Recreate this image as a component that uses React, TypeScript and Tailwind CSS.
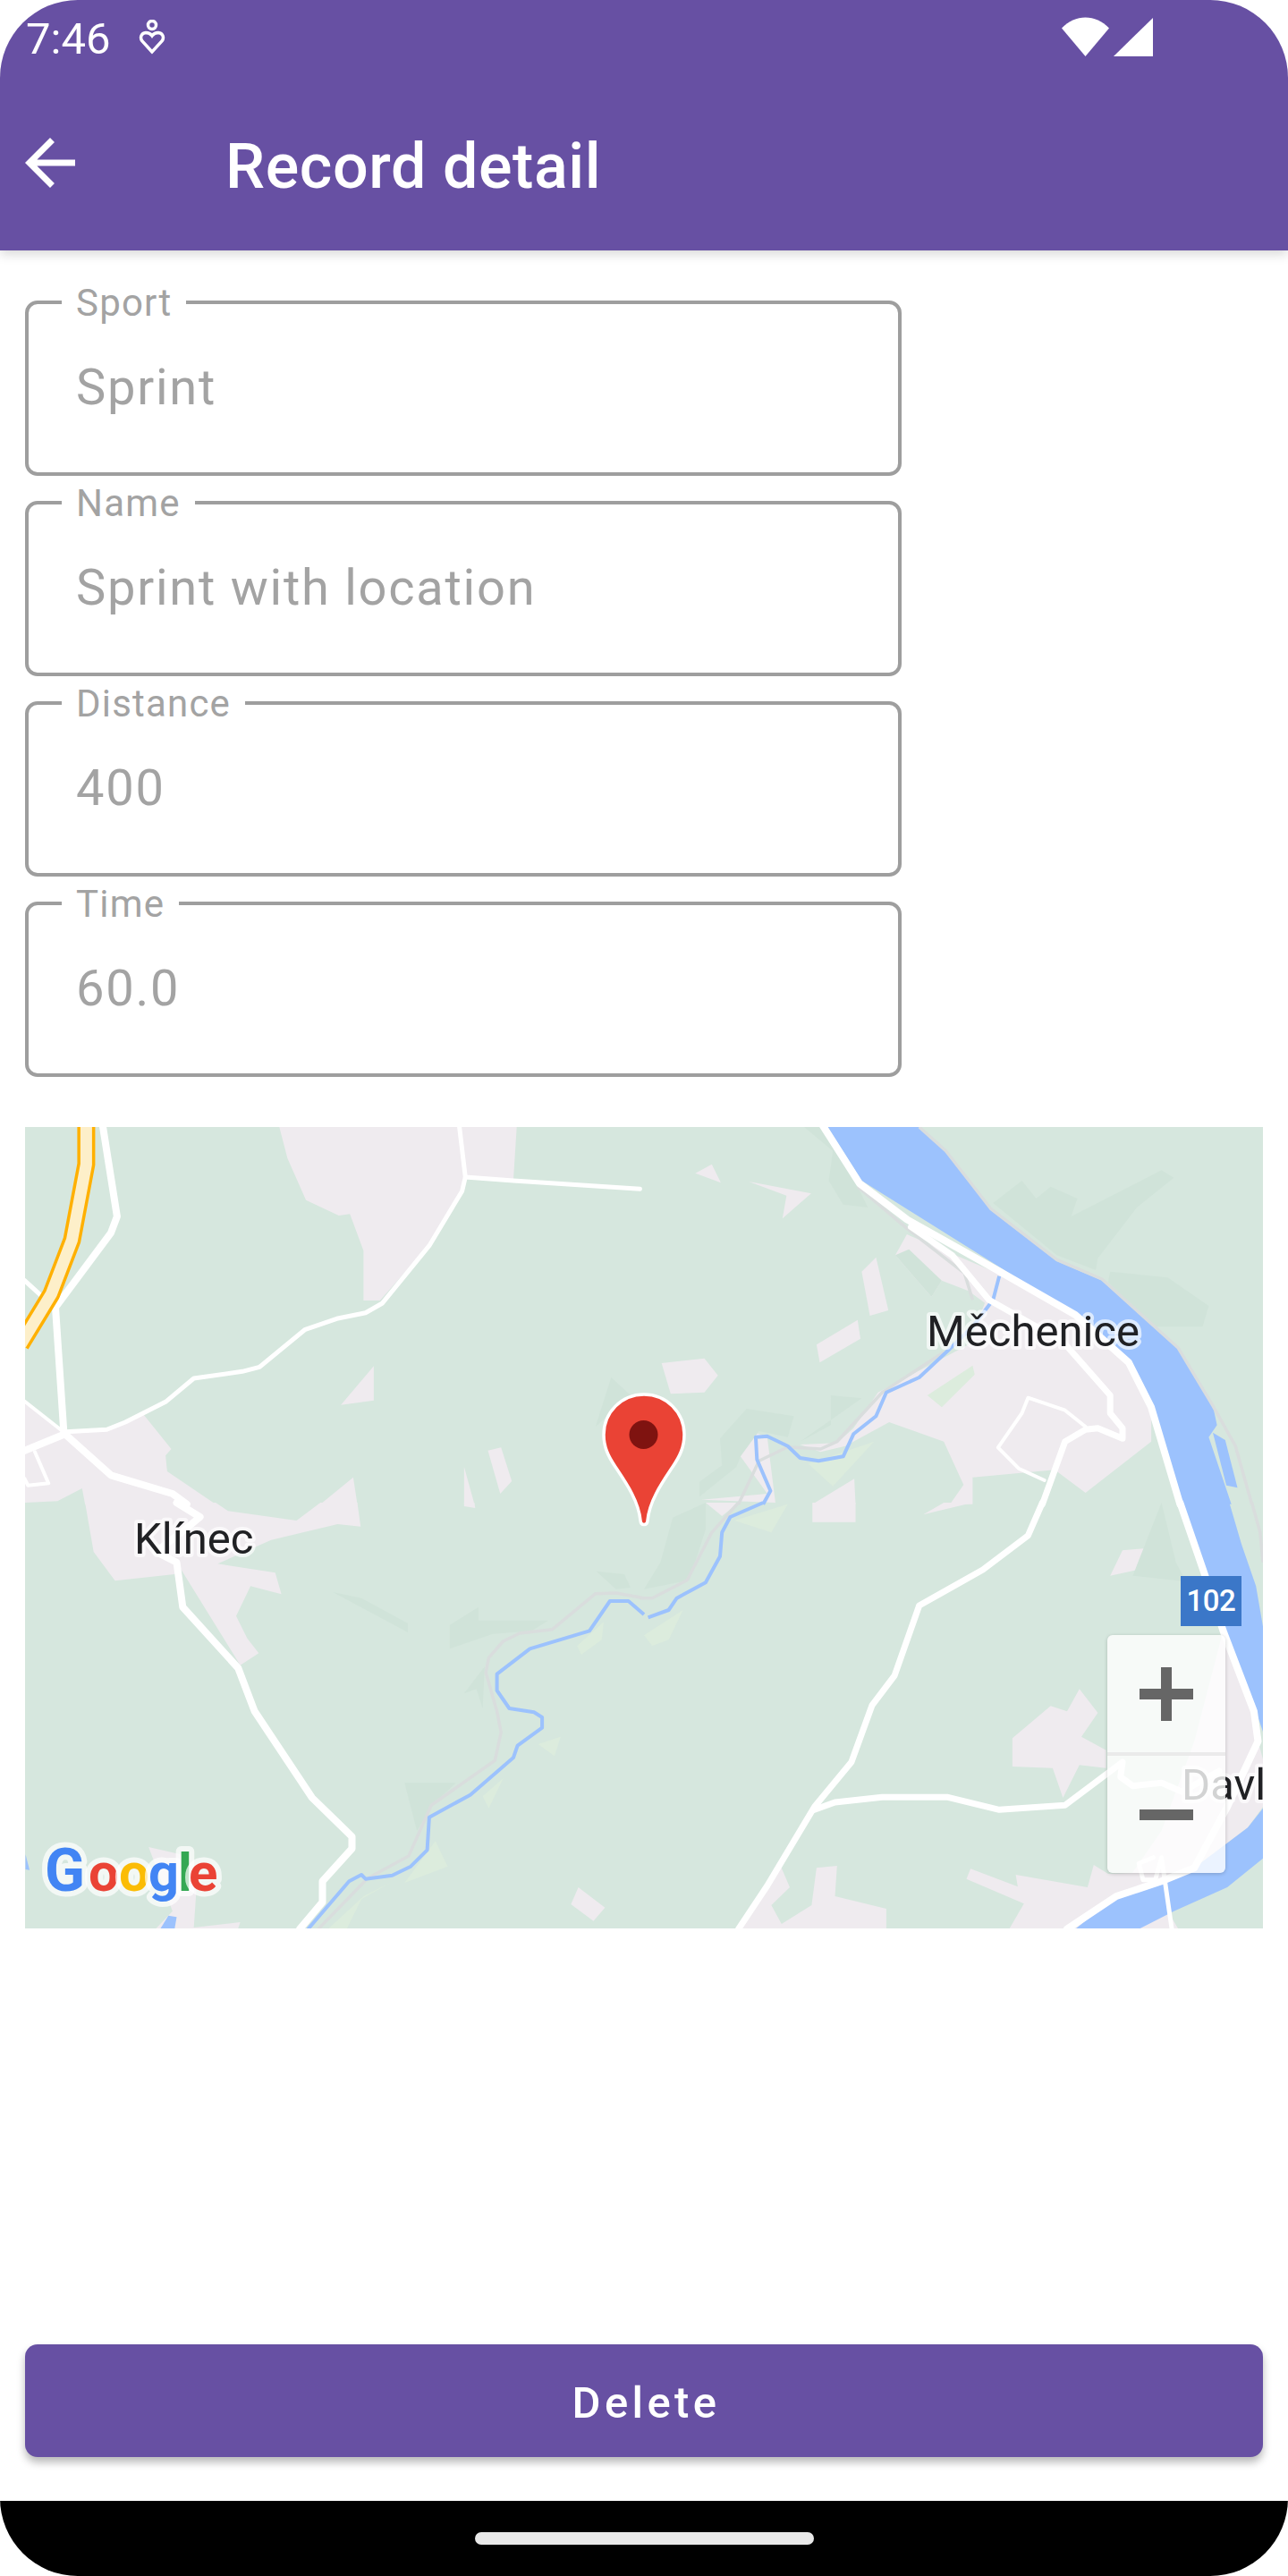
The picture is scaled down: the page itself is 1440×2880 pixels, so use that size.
type Pt = [number, number];

const purple = "bg-[#6750a3]";

// map traced in zoomed crop coordinates, one helper per crop
const conv = (ox: number, oy: number) => (pts: Pt[]) =>
  pts.map(([x, y]) => `${(ox + x * 0.4592).toFixed(1)},${(oy + y / 3).toFixed(1)}`).join(" ");
const tl = conv(0, 1240);
const tr = conv(720, 1240);
const bl = conv(0, 1680);
const br = conv(720, 1680);

const urban: string[] = [
  tl([[680, 60], [700, 165], [745, 305], [825, 357], [852, 352], [885, 475], [885, 642], [925, 642], [1045, 455], [1125, 275], [1135, 235], [1250, 235], [1258, 60]]),
  tl([[60, 980], [150, 1078], [260, 1075], [350, 1025], [417, 1140], [403, 1162], [407, 1215], [525, 1325], [207, 1325], [200, 1272], [140, 1315], [60, 1320]]),
  tl([[780, 1325], [860, 1235], [870, 1325]]),
  tl([[830, 992], [910, 862], [910, 977]]),
  tl([[1188, 1145], [1220, 1135], [1246, 1248], [1218, 1290]]),
  tl([[1130, 1200], [1155, 1325], [1130, 1325]]),
  bl([[207, 0], [525, 0], [555, 28], [722, 60], [780, 0], [870, 0], [878, 80], [822, 72], [660, 125], [530, 205], [670, 235], [685, 307], [610, 280], [575, 380], [602, 455], [630, 505], [585, 545], [430, 200], [425, 240], [280, 262], [228, 165]]),
  bl([[1130, 0], [1155, 0], [1157, 18], [1130, 12]]),
  bl([[1408, 1290], [1473, 1358], [1445, 1403], [1390, 1347]]),
  bl([[362, 1155], [440, 1180], [478, 1300], [472, 1425], [585, 1407], [580, 1428], [380, 1428], [420, 1370]]),
  tr([[125, 215], [165, 185], [187, 247]]),
  tr([[255, 243], [407, 283], [337, 367], [347, 290]]),
  tr([[530, 545], [565, 497], [595, 675], [550, 693]]),
  tr([[420, 790], [520, 707], [527, 770], [428, 850]]),
  tr([[43, 852], [147, 836], [180, 893], [147, 950], [65, 955]]),
  tr([[640, 420], [612, 490], [700, 630], [725, 575], [790, 610], [830, 650], [790, 790], [570, 950], [510, 1070], [470, 1120], [380, 1125], [430, 1150], [490, 1130], [597, 1050], [730, 1115], [778, 1260], [745, 1325], [800, 1325], [800, 1235], [1000, 1210], [1075, 1287], [1235, 1115], [1235, 1000], [1180, 830], [1050, 680], [860, 550]]),
  tr([[235, 1165], [262, 1080], [300, 1100], [320, 1320], [140, 1310], [300, 1290]]),
  tr([[410, 1325], [512, 1240], [515, 1325]]),
  br([[410, 0], [515, 0], [515, 65], [410, 65]]),
  br([[150, 0], [230, 0], [190, 45]]),
  br([[680, 40], [800, 0], [730, 0]]),
  br([[1135, 245], [1165, 160], [1245, 150], [1258, 208]]),
  br([[897, 790], [990, 682], [1030, 700], [1060, 625], [1105, 705], [1065, 785], [1125, 830], [1125, 890], [1060, 880], [1020, 990], [995, 890], [897, 885]]),
  br([[300, 1280], [330, 1210], [355, 1290], [310, 1350], [335, 1413], [408, 1350], [420, 1225], [470, 1218], [465, 1320], [590, 1362], [590, 1428], [230, 1428]]),
  br([[785, 1262], [795, 1228], [910, 1288], [905, 1248], [1080, 1290], [1095, 1215], [1130, 1245], [1220, 1240], [1300, 1428], [890, 1428], [925, 1345]]),
  br([[1410, 430], [1485, 700], [1495, 800], [1507, 860], [1507, 1020], [1470, 1090], [1340, 1225], [1150, 1320], [1260, 1100], [1340, 800]]),
];

const forest: string[] = [
  tr([[850, 315], [920, 240], [955, 300], [990, 260], [1055, 300], [1040, 360], [1260, 205], [1290, 230], [1200, 330], [1105, 500], [1100, 540], [1005, 490]]),
  tr([[1135, 545], [1275, 565], [1375, 660], [1360, 730], [1240, 730], [1130, 580]]),
  tr([[185, 1105], [250, 1005], [365, 1030], [350, 1100], [280, 1080], [235, 1165], [225, 1200], [135, 1300], [135, 1250], [190, 1195]]),
  tr([[390, 60], [460, 140], [450, 240], [485, 320], [545, 330], [520, 260], [440, 60]]),
  tr([[612, 490], [645, 470], [725, 575], [700, 630]]),
  tr([[380, 1115], [530, 970], [455, 960], [455, 1060]]),
  tl([[1488, 900], [1535, 960], [1450, 1065]]),
  bl([[810, 300], [880, 320], [993, 405], [993, 435]]),
  bl([[1095, 410], [1165, 350], [1165, 395], [1335, 395], [1295, 430], [1200, 440], [1095, 490]]),
  bl([[985, 940], [1110, 940], [1055, 1010], [1015, 1100]]),
  bl([[1130, 640], [1180, 550], [1175, 690], [1160, 625]]),
  bl([[1452, 230], [1520, 240], [1535, 285], [1500, 290]]),
  br([[70, 50], [150, 0], [150, 90], [110, 260], [0, 290], [40, 200]]),
  br([[1190, 245], [1260, 0], [1295, 200], [1320, 265]]),
];

const meadow: string[] = [
  tr([[400, 1190], [560, 1115], [460, 1265]]),
  tr([[690, 960], [800, 860], [805, 890], [725, 1000]]),
  bl([[1405, 480], [1470, 400], [1465, 460], [1415, 510]]),
  bl([[1310, 810], [1365, 785], [1350, 850]]),
  bl([[1175, 985], [1225, 925], [1190, 1025]]),
  bl([[985, 1275], [1060, 1135], [1090, 1220]]),
  bl([[800, 1428], [885, 1320], [950, 1275], [880, 1330], [845, 1428]]),
  br([[220, 60], [350, 5], [310, 100]]),
  br([[0, 445], [95, 360], [60, 460], [20, 480]]),
];

const water: string[] = [
  tr([[445, 55], [530, 240], [1040, 680], [1180, 850], [1235, 990], [1310, 1325], [1430, 1325], [1375, 1100], [1395, 1060], [1385, 995], [1300, 800], [1115, 575], [1005, 510], [845, 340], [730, 130], [665, 55]]),
  br([[1310, 0], [1370, 250], [1410, 430], [1490, 700], [1510, 780], [1510, 440], [1490, 280], [1455, 140], [1425, 0]]),
  br([[1510, 1020], [1470, 1090], [1340, 1225], [1150, 1320], [1050, 1430], [1205, 1430], [1290, 1370], [1420, 1290], [1510, 1190]]),
  tr([[1385, 1085], [1415, 1110], [1445, 1270], [1418, 1262]]),
  bl([[62, 1180], [72, 1232], [62, 1230]]),
  bl([[410, 1385], [430, 1390], [425, 1430], [390, 1430]]),
];

const grayLines: string[] = [
  tr([[520, 260], [640, 400], [780, 550], [800, 640]]),
  tr([[730, 815], [580, 950], [470, 1115], [430, 1140], [350, 1133], [280, 1180], [230, 1325]]),
  br([[230, 0], [165, 100], [105, 260], [20, 320], [-10, 320]]),
  bl([[1568, 320], [1500, 303], [1450, 305], [1345, 425], [1265, 438], [1225, 465], [1190, 520], [1183, 570], [1210, 700], [1220, 770], [1205, 865], [1050, 1015], [995, 1185], [895, 1260], [775, 1430]]),
  tr([[670, 60], [735, 140], [845, 335], [1005, 505], [1115, 570], [1300, 800], [1385, 995], [1440, 1130], [1480, 1325]]),
  br([[1480, 0], [1500, 100], [1507, 200]]),
];

const streams: string[] = [
  tr([[865, 560], [850, 640], [800, 730], [740, 810], [670, 900], [590, 950], [565, 1030], [510, 1090], [485, 1165], [425, 1180], [380, 1170], [350, 1130], [300, 1097], [272, 1100], [275, 1175], [308, 1280], [290, 1325]]),
  br([[290, 0], [210, 48], [190, 100], [185, 180], [150, 268], [80, 320], [60, 360], [10, 385]]),
  bl([[1568, 375], [1530, 330], [1485, 330], [1435, 430], [1290, 490], [1210, 575], [1210, 630], [1240, 690], [1300, 703], [1320, 720], [1320, 755], [1260, 815], [1250, 855], [1145, 980], [1045, 1055], [1040, 1165], [1000, 1220], [955, 1250], [890, 1262], [880, 1248], [850, 1270], [750, 1430]]),
];

const roads: { d: string; w: number }[] = [
  { d: tl([[250, 55], [285, 360], [270, 415], [135, 665], [155, 1078]]), w: 8 },
  { d: tl([[60, 575], [100, 625]]), w: 5 },
  { d: tl([[160, 1082], [260, 1075], [305, 1050], [403, 982], [472, 903], [590, 880], [632, 865], [742, 740], [820, 703], [890, 683], [930, 652], [1045, 458], [1125, 275], [1133, 228], [1118, 55]]), w: 5 },
  { d: tl([[1133, 228], [1250, 240], [1558, 268]]), w: 5 },
  { d: tl([[60, 980], [150, 1078]]), w: 4 },
  { d: tl([[60, 1145], [158, 1090], [270, 1228], [420, 1290], [455, 1325]]), w: 8 },
  { d: tl([[85, 1150], [118, 1255], [68, 1262], [60, 1240]]), w: 4 },
  { d: bl([[430, 0], [487, 48], [455, 85], [380, 165], [430, 200], [445, 350], [580, 555], [620, 700], [760, 990], [857, 1120], [857, 1160], [785, 1270], [785, 1340], [730, 1430]]), w: 8 },
  { d: tr([[435, 55], [525, 250], [640, 370], [860, 540], [1050, 690], [1180, 850], [1235, 1000], [1305, 1325]]), w: 8 },
  { d: br([[1305, 0], [1365, 240], [1410, 430], [1485, 700], [1495, 800], [1420, 1020], [1340, 1225], [1260, 1270], [1150, 1320], [1030, 1430]]), w: 8 },
  { d: tr([[650, 395], [750, 490], [840, 640], [1020, 780], [1135, 960], [1135, 1020], [1165, 1070], [1165, 1105], [1105, 1070], [1075, 1075], [1025, 1115], [970, 1325]]), w: 7 },
  { d: br([[970, 0], [935, 110], [825, 225], [670, 345], [610, 580], [555, 680], [505, 870], [415, 1020], [300, 1285], [230, 1430]]), w: 7 },
  { d: br([[415, 1030], [465, 1005], [580, 988], [740, 988], [865, 1030], [1025, 1015], [1165, 870], [1160, 920], [1190, 950], [1260, 940], [1310, 970], [1400, 900]]), w: 7 },
  { d: tr([[1075, 1065], [1025, 1010], [935, 968], [920, 1020], [862, 1135], [912, 1205], [975, 1245]]), w: 4 },
  { d: br([[1240, 1190], [1205, 1210], [1215, 1265], [1245, 1265], [1260, 1190], [1285, 1430]]), w: 5 },
];

function MapView() {
  return (
    <div className="relative mt-[56px] h-[896px] w-full overflow-hidden bg-[#d6e7de]">
      <svg className="block h-full w-full" viewBox="28 1260 1384 896">
        {urban.map((p, i) => <polygon key={i} points={p} fill="#efebef" />)}
        {forest.map((p, i) => <polygon key={i} points={p} fill="#d0e3d9" />)}
        {meadow.map((p, i) => <polygon key={i} points={p} fill="#dcecdd" />)}
        {water.map((p, i) => <polygon key={i} points={p} fill="#9cc2fd" />)}
        {grayLines.map((p, i) => <polyline key={i} points={p} fill="none" stroke="#d9dddd" strokeWidth="3.5" strokeLinejoin="round" />)}
        {streams.map((p, i) => <polyline key={i} points={p} fill="none" stroke="#9cc2fd" strokeWidth="4" strokeLinejoin="round" />)}
        {roads.map((r, i) => <polyline key={i} points={r.d} fill="none" stroke="#ffffff" strokeWidth={r.w} strokeLinejoin="round" strokeLinecap="round" />)}

        {/* highway */}
        <polyline points={tl([[210, 55], [210, 185], [175, 440], [125, 620], [50, 790]])} fill="none" stroke="#ffb000" strokeWidth="20" strokeLinejoin="round" />
        <polyline points={tl([[210, 55], [210, 185], [175, 440], [125, 620], [50, 790]])} fill="none" stroke="#fdefc9" strokeWidth="13" strokeLinejoin="round" />

        <g className="[font-family:Roboto,sans-serif] [paint-order:stroke]" fill="#202124" stroke="#ffffff" strokeOpacity="0.65" strokeWidth="8" strokeLinejoin="round" fontSize="49">
          <text x="1036" y="1505">Měchenice</text>
          <text x="150" y="1737">Klínec</text>
          <text x="1321" y="2012">Davle</text>
        </g>

        <g className="[font-family:Roboto,sans-serif] [paint-order:stroke]" stroke="#ffffff" strokeOpacity="0.7" strokeWidth="12" strokeLinejoin="round" fontWeight="700">
          <text y="2114" fontSize="60">
            <tspan x="50" fontSize="66" fill="#4285f4">G</tspan>
            <tspan x="99" fill="#ea4335">o</tspan>
            <tspan x="133" fill="#fbbc05">o</tspan>
            <tspan x="166" fill="#4285f4">g</tspan>
            <tspan x="199" fill="#34a853">l</tspan>
            <tspan x="211" fill="#ea4335">e</tspan>
          </text>
        </g>

        <path d="M720 1559C695 1559 675 1579 675 1604C675 1618 680 1628 688 1640C700 1658 714 1678 716 1700C716.500 1706 723.500 1706 724 1700C726 1678 740 1658 752 1640C760 1628 765 1618 765 1604C765 1579 745 1559 720 1559Z" fill="#ea4335" stroke="#ffffff" strokeWidth="3.5" />
        <circle cx="719.500" cy="1604" r="16" fill="#7f1310" />
      </svg>

      <div className="absolute left-[1292px] top-[502px] flex h-[56px] w-[68px] items-center justify-center bg-[#3b77c8] text-[33px] font-medium tracking-[-0.5px] text-white">
        102
      </div>

      <div className="absolute left-[1210px] top-[568px] flex h-[266px] w-[132px] flex-col rounded-[6px] bg-white/80 shadow-[0_1px_4px_rgba(0,0,0,0.2)]">
        <div className="flex flex-1 items-center justify-center">
          <svg width="60" height="60" viewBox="0 0 60 60"><path d="M24 0h12v24h24v12H36v24H24V36H0V24h24z" fill="#666666" /></svg>
        </div>
        <div className="h-[4px] bg-[#e6e6e6]/80" />
        <div className="flex flex-1 items-center justify-center">
          <svg width="60" height="12" viewBox="0 0 60 12"><path d="M0 0h60v12H0z" fill="#666666" /></svg>
        </div>
      </div>
    </div>
  );
}

function Field({ label, value }: { label: string; value: string }) {
  return (
    <div className="relative flex h-[196px] w-[980px] items-center rounded-[14px] border-[4px] border-[#9e9e9e] pb-[3px] pl-[53px] text-[56px] leading-none tracking-[1.75px] text-[#a3a3a3]">
      {value}
      <span className="absolute left-[37px] top-[-26px] bg-white px-[16px] text-[42px] leading-[50px] tracking-[1.2px]">{label}</span>
    </div>
  );
}

export default function App() {
  return (
    <div className="flex h-[2880px] w-[1440px] flex-col overflow-hidden rounded-[87px] bg-white [font-family:Roboto,sans-serif]">
      <header className={`relative z-10 h-[280px] shrink-0 ${purple} text-white shadow-[0_4px_12px_rgba(0,0,0,0.16)]`}>
        <div className="flex h-[84px] items-start pl-[29px]">
          <span className="mt-[15px] text-[49px] leading-[57px]">7:46</span>
          <svg className="ml-[32px] mt-[22px]" width="30" height="40" viewBox="0 0 30 40" fill="none" stroke="#ffffff" strokeWidth="3.5">
            <circle cx="15" cy="6" r="4.5" />
            <path d="M15 36L4 24C1 20 3 15 8 14.5C11 14.5 13.5 16 15 18C16.5 16 19 14.5 22 14.5C27 15 29 20 26 24Z" />
          </svg>
          <svg className="ml-[1002px] mt-[19px]" width="102" height="44" viewBox="0 0 102 44" fill="#ffffff">
            <path d="M0 12.500C15 -3.500 38 -3.500 53 12.500L26.500 44Z" />
            <path d="M58 44L102 1V44Z" />
          </svg>
        </div>
        <div className="flex h-[196px] items-start">
          <svg className="mt-[56px] ml-[14px]" width="84" height="84" viewBox="0 0 24 24" fill="#ffffff">
            <path d="M20 11H7.830l5.590-5.590L12 4l-8 8 8 8 1.410-1.410L7.830 13H20v-2z" />
          </svg>
          <h1 className="ml-[154px] mt-[61px] text-[70px] font-medium leading-[82px] tracking-[0.6px]">Record detail</h1>
        </div>
      </header>

      <main className="flex min-h-0 flex-1 flex-col px-[28px] pt-[56px]">
        <div className="flex flex-col gap-[28px]">
          <Field label="Sport" value="Sprint" />
          <Field label="Name" value="Sprint with location" />
          <Field label="Distance" value="400" />
          <Field label="Time" value="60.0" />
        </div>
        <MapView />
        <button
          className={`mb-[49px] mt-auto flex h-[126px] w-full items-center justify-center rounded-[14px] pl-[5px] pt-[6px] ${purple} text-[49px] font-medium tracking-[4.375px] text-white shadow-[0_6px_10px_rgba(0,0,0,0.28)]`}
          type="button"
        >
          Delete
        </button>
      </main>

      <div className="flex h-[84px] shrink-0 items-start justify-center bg-black pt-[35px]">
        <div className="h-[14px] w-[379px] rounded-full bg-[#e8e8e8]" />
      </div>
    </div>
  );
}
